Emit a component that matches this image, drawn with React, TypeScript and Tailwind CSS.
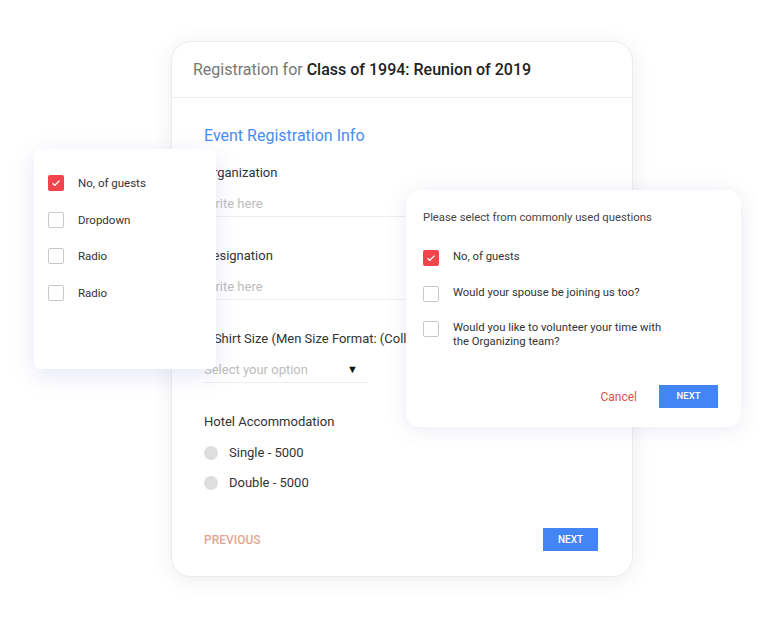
// Registration form with floating question pickers

const font = { fontFamily: "Roboto, 'Noto Sans', sans-serif" };

const Check = ({ checked }: { checked?: boolean }) => (
    <div
        className={`flex h-4 w-4 shrink-0 items-center justify-center rounded-[2px] ${
            checked ? 'bg-[#f2444c]' : 'border border-[#c8c8c8] bg-white'
        }`}
    >
        {checked && (
            <svg width="10" height="8" viewBox="0 0 10 8" fill="none">
                <path d="M1.5 4.2 3.8 6.3 8.5 1.6" stroke="white" strokeWidth="1.3" />
            </svg>
        )}
    </div>
);

const Field = ({ label, placeholder, line = 'w-full', select }: {
    label: string;
    placeholder: string;
    line?: string;
    select?: boolean;
}) => (
    <div className="mt-[30px]">
        <p className="h-[18px] whitespace-nowrap text-[13px] leading-[18px] text-[#333]">{label}</p>
        <div className={`mt-[13px] flex h-[22px] items-start justify-between border-b border-[#eeeeee] ${line}`}>
            <span className="text-[13px] leading-[18px] text-[#bdbdbd]">{placeholder}</span>
            {select && <span className="mr-[9px] mt-[1px] text-[11px] leading-[16px] text-[#111]">▼</span>}
        </div>
    </div>
);

export default function App() {
    const leftItems = [
        { label: 'No, of guests', checked: true },
        { label: 'Dropdown' },
        { label: 'Radio' },
        { label: 'Radio' },
    ];

    return (
        <div className="relative h-[620px] w-[775px] overflow-hidden bg-white" style={font}>
            {/* main registration card */}
            <div className="ml-[171px] mt-[41px] h-[536px] w-[462px] rounded-[20px] border border-[#ececec] bg-white shadow-[0_3px_22px_rgba(0,0,0,0.07)]">
                <div className="flex h-[56px] items-center border-b border-[#ececec] px-[21px]">
                    <h1 className="text-[16px] text-[#777]">
                        Registration for <span className="font-medium text-[#222]">Class of 1994: Reunion of 2019</span>
                    </h1>
                </div>

                <div className="px-[32px]">
                    <h2 className="mt-[28px] text-[16px] leading-[20px] text-[#4a8cf0]">Event Registration Info</h2>

                    <div className="-mt-[12px]">
                        <Field label="Organization" placeholder="Write here" />
                        <Field label="Designation" placeholder="Write here" />
                        <Field label="T-Shirt Size (Men Size Format: (Collar Size))" placeholder="Select your option" line="w-[163px]" select />
                    </div>

                    <p className="mt-[30px] h-[18px] text-[13px] leading-[18px] text-[#333]">Hotel Accommodation</p>
                    <div className="mt-[12px] flex flex-col gap-[10px]">
                        {['Single - 5000', 'Double - 5000'].map((opt) => (
                            <div key={opt} className="flex h-[20px] items-center gap-[11px]">
                                <div className="h-[14px] w-[14px] rounded-full bg-[#dedede]" />
                                <span className="text-[13px] text-[#333]">{opt}</span>
                            </div>
                        ))}
                    </div>

                    <div className="mt-[35px] flex items-center justify-between pr-[2px]">
                        <span className="text-[12px] font-medium text-[#e4a594]">PREVIOUS</span>
                        <button className="flex h-[23px] w-[55px] items-center justify-center bg-[#4286f5] text-[10px] font-medium text-white">
                            NEXT
                        </button>
                    </div>
                </div>
            </div>

            {/* left floating picker */}
            <div className="absolute left-[34px] top-[149px] h-[220px] w-[182px] rounded-[6px] bg-white pl-[14px] pt-[26px] shadow-[0_6px_22px_rgba(110,120,210,0.18)]">
                <div className="flex flex-col gap-[20.5px]">
                    {leftItems.map((item, i) => (
                        <div key={i} className="flex h-4 items-center gap-[14px]">
                            <Check checked={item.checked} />
                            <span className="text-[11.5px] leading-[16px] text-[#333]">{item.label}</span>
                        </div>
                    ))}
                </div>
            </div>

            {/* right floating picker */}
            <div className="absolute left-[406px] top-[190px] h-[237px] w-[335px] rounded-[14px] bg-white px-[17px] pt-[20px] shadow-[0_2px_20px_rgba(90,100,160,0.13)]">
                <p className="text-[11.3px] leading-[16px] text-[#444]">Please select from commonly used questions</p>

                <div className="mt-[24px] flex flex-col">
                    <div className="flex items-start gap-[14px]">
                        <Check checked />
                        <span className="text-[11.3px] leading-[14px] text-[#333]">No, of guests</span>
                    </div>
                    <div className="mt-[20px] flex items-start gap-[14px]">
                        <Check />
                        <span className="text-[11.3px] leading-[14px] text-[#333]">Would your spouse be joining us too?</span>
                    </div>
                    <div className="mt-[19px] flex items-start gap-[14px]">
                        <Check />
                        <span className="w-[215px] text-[11.3px] leading-[14px] text-[#333]">
                            Would you like to volunteer your time with the Organizing team?
                        </span>
                    </div>
                </div>

                <div className="mt-[36px] flex items-center justify-end gap-[22px] pr-[6px]">
                    <span className="text-[12px] text-[#d9534a]">Cancel</span>
                    <button className="flex h-[23px] w-[59px] items-center justify-center bg-[#4286f5] text-[9.5px] font-medium text-white">
                        NEXT
                    </button>
                </div>
            </div>
        </div>
    );
}
